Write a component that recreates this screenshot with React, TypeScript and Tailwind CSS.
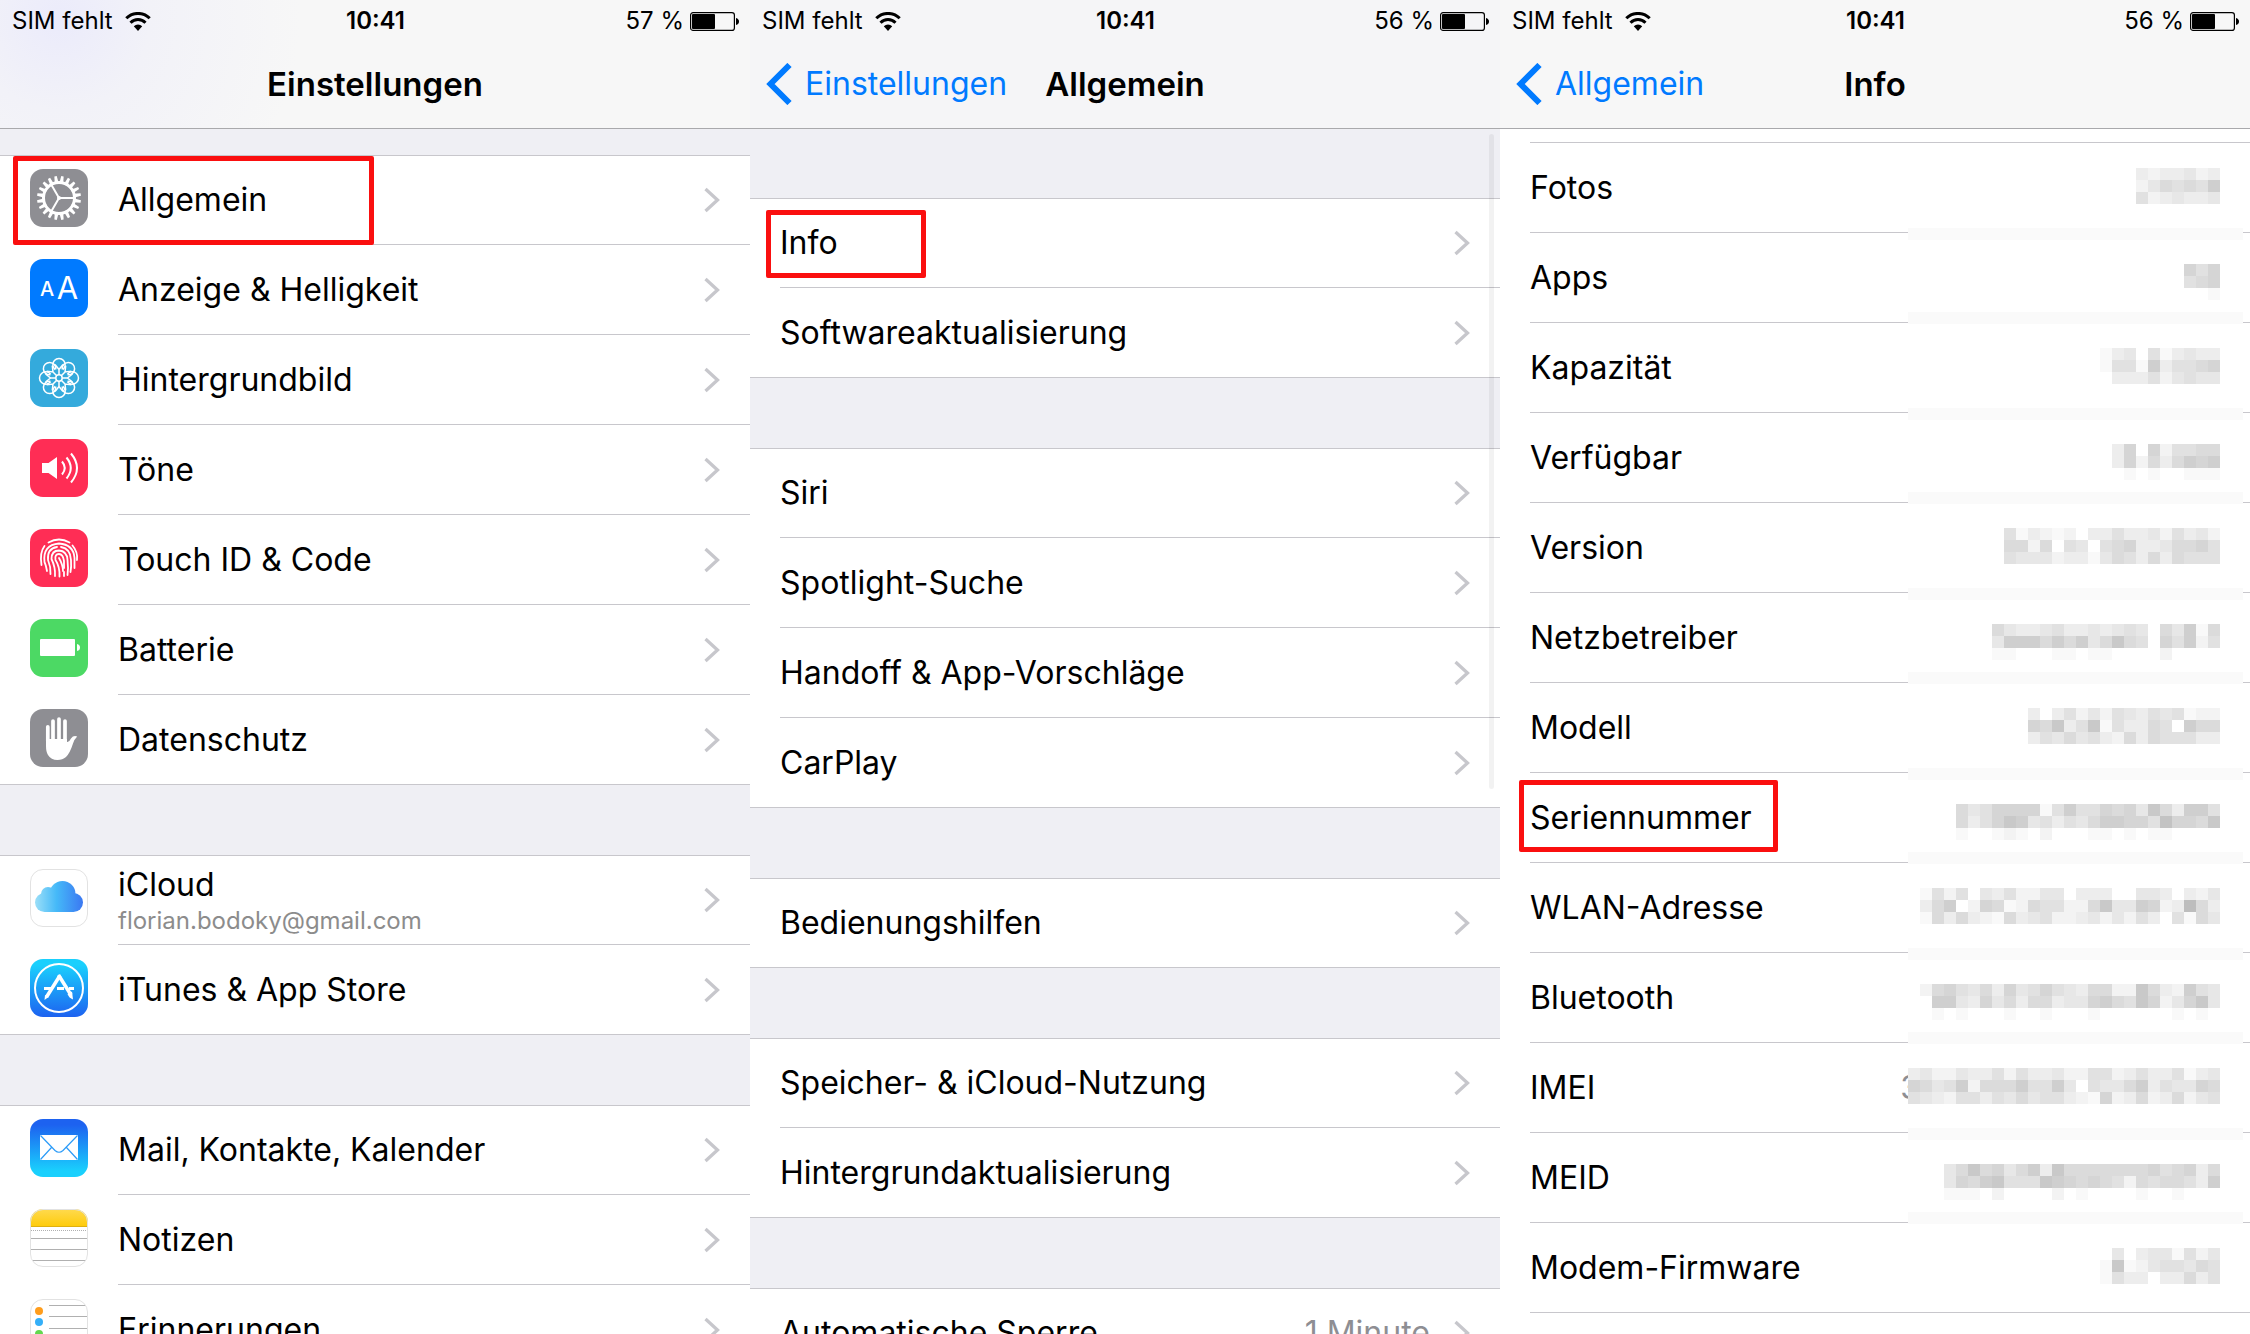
// ============================================================
// iOS SETTINGS — EINSTELLUNGEN / ALLGEMEIN / INFO
// App.tsx
// ============================================================

import type { ReactNode } from 'react'

interface SettingRow {
  label: string
  sub?: string
  value?: string
  icon?: ReactNode
  mark?: string
}

interface InfoRow {
  label: string
  lead?: string
  cells: string[]
  mark?: string
}

// ---------- App icons (58 x 58) ----------

function Tile({ fill, outlined, children }: { fill: string; outlined?: boolean; children: ReactNode }) {
  return (
    <svg viewBox="0 0 58 58" className="w-[58px] h-[58px]" aria-hidden="true">
      <rect width="58" height="58" rx="13" fill={fill} />
      {children}
      {outlined && <rect x="0.5" y="0.5" width="57" height="57" rx="12.5" fill="none" stroke="#e2e2e2" />}
    </svg>
  )
}

const TEETH = Array.from({ length: 20 }, (_, i) => i * 18)
const PETALS = Array.from({ length: 8 }, (_, i) => i * 45)

const GearIcon = () => (
  <Tile fill="#8e8e93">
    <g fill="#fff">
      {TEETH.map((a) => <path key={a} d="M27 14.5 L27.8 7 H30.2 L31 14.5 Z" transform={`rotate(${a + 9} 29 29)`} />)}
    </g>
    <circle cx="29" cy="29" r="15.5" fill="none" stroke="#fff" strokeWidth="3" />
    <path d="M29 29 H44 M29 29 L21.5 16 M29 29 L21.5 42" stroke="#fff" strokeWidth="2" />
    <circle cx="29" cy="29" r="2" fill="#fff" />
  </Tile>
)

const DisplayIcon = () => (
  <Tile fill="#007aff">
    <g fill="#fff" fontFamily="Inter, sans-serif">
      <text x="17" y="37" fontSize="20" fontWeight="500" textAnchor="middle">A</text>
      <text x="37.5" y="40" fontSize="31" textAnchor="middle">A</text>
    </g>
  </Tile>
)

const WallpaperIcon = () => (
  <Tile fill="#34aadc">
    <g fill="none" stroke="#fff" strokeWidth="1.5">
      {PETALS.map((a) => (
        <g key={a} transform={`rotate(${a} 29 29)`}>
          <path d="M25.2 20.6 A6.2 6.2 0 1 1 32.8 20.6" />
          <path d="M25 15.5 L29 20.5 L33 15.5 M29 20.5 V25.8" />
        </g>
      ))}
      <circle cx="29" cy="29" r="3.2" />
    </g>
  </Tile>
)

const SoundIcon = () => (
  <Tile fill="#ff2d55">
    <path d="M12 24 H18.5 L27 18 V40 L18.5 34 H12 Z" fill="#fff" />
    <g fill="none" stroke="#fff" strokeWidth="2">
      <path d="M32 22.5 Q37.5 29 32 35.5" />
      <path d="M36.5 18.5 Q45 29 36.5 39.5" />
      <path d="M41 14.5 Q53 29 41 43.5" />
    </g>
  </Tile>
)

const TouchIdIcon = () => (
  <Tile fill="#ff2d55">
    <g fill="none" stroke="#fff" strokeWidth="1.8" strokeLinecap="round">
      <path d="M18.5 13.5 Q29 7.5 39.5 13.5" />
      <path d="M14.5 17 Q9.5 23.5 11.5 36" />
      <path d="M42.5 16.5 Q48 23 47 31" />
      <path d="M17 42 Q16 36 14.5 33 Q12.5 16 29 14.5 Q43.5 15.5 44.5 29 V39" />
      <path d="M20.5 45 Q21 38 18 31 Q17 19.5 27 18" />
      <path d="M31 18 Q40.5 19.5 41 31 Q41.5 38 40.5 43" />
      <path d="M25 47 Q25.5 38 21.5 30 Q21.5 21.5 29 21.5 Q37 22 37.5 31 Q38.5 39 37.5 46" />
      <path d="M29.5 47.5 Q30 38 25.5 31 Q24.5 25 29 25 Q33 25 34 32 V39" />
      <path d="M34 43 V47" />
      <path d="M29 29 Q33 36 33 42" />
    </g>
  </Tile>
)

const BatteryIcon = () => (
  <Tile fill="#4cd964">
    <rect x="10" y="20" width="35" height="17" rx="1" fill="#fff" />
    <path d="M47 25 Q50 25.5 50 28.5 Q50 31.5 47 32 Z" fill="#fff" />
  </Tile>
)

const PrivacyIcon = () => (
  <Tile fill="#8e8e93">
    <path d="M17.8 17.8 V32 M23 12 V32 M29 10 V32 M35 12 V32" stroke="#fff" strokeWidth="3.7" strokeLinecap="round" />
    <path d="M16 30 H37 V33 Q39 33.5 41 29.5 Q43.5 26 47.2 27.5 Q44.5 30 43 34.5 Q40 44 36 48 Q32.5 51 27.5 51 Q21 51 18 46 Q16 43 16 37 Z" fill="#fff" />
  </Tile>
)

const CloudIcon = () => (
  <Tile fill="#fff" outlined>
    <defs>
      <linearGradient id="cloud" gradientUnits="userSpaceOnUse" x1="5" y1="0" x2="53" y2="0">
        <stop offset="0" stopColor="#9bdff8" />
        <stop offset="0.45" stopColor="#45b9f8" />
        <stop offset="1" stopColor="#3b78f2" />
      </linearGradient>
    </defs>
    <g fill="url(#cloud)">
      <circle cx="14.5" cy="33.5" r="9.5" />
      <circle cx="18" cy="25" r="7" />
      <circle cx="32.5" cy="25" r="13" />
      <circle cx="43.5" cy="33.5" r="9.5" />
      <rect x="14.5" y="30" width="29" height="13" />
    </g>
  </Tile>
)

const StoreIcon = () => (
  <Tile fill="url(#store)">
    <defs>
      <linearGradient id="store" x1="0" y1="0" x2="0" y2="1">
        <stop offset="0.1" stopColor="#1ad0fd" />
        <stop offset="1" stopColor="#1d62f0" />
      </linearGradient>
    </defs>
    <g fill="none" stroke="#fff">
      <circle cx="29" cy="29" r="24" strokeWidth="2" />
      <path d="M14 29.5 H22 M27 29.5 H34 M39 29.5 H44" strokeWidth="3" />
      <path d="M30 16.5 L16.5 38" strokeWidth="3.5" />
      <path d="M28.5 16 L41 36" strokeWidth="3.5" />
    </g>
    <path d="M15 36 L18.5 38 L14.5 41 Z M37.5 35 L42 32.5 L43 40.5 Q39 39 37.5 35 Z" fill="#fff" />
  </Tile>
)

const MailIcon = () => (
  <Tile fill="url(#mail)">
    <defs>
      <linearGradient id="mail" x1="0" y1="0" x2="0" y2="1">
        <stop offset="0.1" stopColor="#1d62f0" />
        <stop offset="0.9" stopColor="#1ad0fd" />
      </linearGradient>
    </defs>
    <rect x="10" y="16" width="38" height="25" rx="0.5" fill="#fff" />
    <path d="M10.5 16.5 L25 31.5 Q29 35 33 31.5 L47.5 16.5 M10.5 40.5 L21.5 28.5 M47.5 40.5 L36.5 28.5" fill="none" stroke="#2b9bf8" strokeWidth="1.2" />
  </Tile>
)

const NotesIcon = () => (
  <Tile fill="#fff" outlined>
    <defs>
      <linearGradient id="notes" x1="0" y1="0" x2="0" y2="1">
        <stop offset="0" stopColor="#ffda4f" />
        <stop offset="1" stopColor="#fecb09" />
      </linearGradient>
    </defs>
    <path d="M0 18 V13 A13 13 0 0 1 13 0 H45 A13 13 0 0 1 58 13 V18 Z" fill="url(#notes)" />
    <path d="M0 17.5 H58" stroke="#dfb010" />
    <path d="M1 21.5 H57" stroke="#b0b0b0" strokeDasharray="1 1" />
    <path d="M0 29.5 H58 M0 40.5 H58 M2 51.5 H56" stroke="#b0b0b0" />
  </Tile>
)

const RemindersIcon = () => (
  <Tile fill="#fff" outlined>
    <path d="M19 6.5 H56 M19 17.5 H58 M19 29.5 H58 M19 40.5 H58" stroke="#b0b0b0" />
    <circle cx="9" cy="12" r="4" fill="#ff9d1c" />
    <circle cx="9" cy="23" r="4" fill="#34aff8" />
    <circle cx="9" cy="35" r="4" fill="#62d84e" />
  </Tile>
)

// ---------- Data ----------

const SETTINGS: SettingRow[][] = [
  [
    { label: 'Allgemein', icon: <GearIcon />, mark: 'left-[13px] top-px w-[361px] h-[89px]' },
    { label: 'Anzeige & Helligkeit', icon: <DisplayIcon /> },
    { label: 'Hintergrundbild', icon: <WallpaperIcon /> },
    { label: 'Töne', icon: <SoundIcon /> },
    { label: 'Touch ID & Code', icon: <TouchIdIcon /> },
    { label: 'Batterie', icon: <BatteryIcon /> },
    { label: 'Datenschutz', icon: <PrivacyIcon /> },
  ],
  [
    { label: 'iCloud', sub: 'florian.bodoky@gmail.com', icon: <CloudIcon /> },
    { label: 'iTunes & App Store', icon: <StoreIcon /> },
  ],
  [
    { label: 'Mail, Kontakte, Kalender', icon: <MailIcon /> },
    { label: 'Notizen', icon: <NotesIcon /> },
    { label: 'Erinnerungen', icon: <RemindersIcon /> },
  ],
]

const GENERAL: SettingRow[][] = [
  [{ label: 'Info', mark: 'left-4 top-3 w-40 h-[68px]' }, { label: 'Softwareaktualisierung' }],
  [{ label: 'Siri' }, { label: 'Spotlight-Suche' }, { label: 'Handoff & App-Vorschläge' }, { label: 'CarPlay' }],
  [{ label: 'Bedienungshilfen' }],
  [{ label: 'Speicher- & iCloud-Nutzung' }, { label: 'Hintergrundaktualisierung' }],
  [{ label: 'Automatische Sperre', value: '1 Minute' }],
]

// Pixelated values: one hex digit per cell, 0 = white, higher = darker
const INFO: InfoRow[] = [
  { label: 'Fotos',          cells: ['3233423', '2465658', '5234334'] },
  { label: 'Apps',           cells: ['757', '567', '001'] },
  { label: 'Kapazität',      cells: ['1340513433', '1551835567', '0333524544'] },
  { label: 'Verfügbar',      cells: ['370725566', '372636878', '010100111'] },
  { label: 'Version',        cells: ['0513212033533425342', '0662605405673346675', '0544423314653636555'] },
  { label: 'Netzbetreiber',  cells: ['6433453343454064816', '4888686846965075825', '1100011011000020000'] },
  { label: 'Modell',         cells: ['3035242543545122', '7693591533650866', '3546453263655533'] },
  { label: 'Seriennummer',   cells: ['6457777158557674963885', '63579845354688775a7769', '1001210200011010110000'], mark: 'left-[19px] top-[7px] w-[259px] h-[72px]' },
  { label: 'WLAN-Adresse',   cells: ['1525043522440333004430324', '3680276126552269448723b63', '1636321634522342425305164'] },
  { label: 'Bluetooth',      cells: ['2675463745754366229632854', '0884374636634478659724794', '0101000100100010000001010'] },
  { label: 'IMEI', lead: '3', cells: ['34224335253342255235335134', '76458266685584054468354476', '54325535464553217236236245'] },
  { label: 'MEID',           cells: ['46967468396666666756736', '47689555987676526566538', '11102000020100001001000'] },
  { label: 'Modem-Firmware', cells: ['0403441524', '1912455465', '1533033635'] },
]

// ---------- Parts ----------

function StatusBar({ percent }: { percent: string }) {
  return (
    <div className="grid grid-cols-3 items-center h-[42px] pl-3 pr-[11px] text-2xl leading-6">
      <div className="flex items-center gap-3">
        <span>SIM fehlt</span>
        <svg viewBox="0 0 26 19" className="w-[26px] h-[19px]" aria-hidden="true">
          <g fill="none" stroke="#000" strokeWidth="3">
            <path d="M1.3 6.3 A16.5 16.5 0 0 1 24.7 6.3" />
            <path d="M5.5 10.7 A10.6 10.6 0 0 1 20.5 10.7" />
          </g>
          <path d="M13 19 L8.8 14.3 A6 6 0 0 1 17.2 14.3 Z" />
        </svg>
      </div>
      <span className="text-center font-semibold">10:41</span>
      <div className="flex items-center justify-end gap-1.5">
        <span>{percent} %</span>
        <svg viewBox="0 0 49 19" className="w-[49px] h-[19px]" aria-hidden="true">
          <rect x="0.6" y="0.6" width="43.8" height="17.8" rx="2.5" fill="none" stroke="#000" strokeWidth="1.2" />
          <rect x="2" y="2" width="23" height="15" rx="1" />
          <path d="M46 6 Q49 7 49 9.5 Q49 12 46 13 Z" />
        </svg>
      </div>
    </div>
  )
}

function NavHeader({ title, back, percent, tint }: { title: string; back?: string; percent: string; tint: string }) {
  return (
    <header className={`h-[129px] border-b border-[#a9a9ac] ${tint}`}>
      <StatusBar percent={percent} />
      <nav className="relative flex items-center justify-center h-[84px]">
        {back && (
          <a href="#" className="absolute left-4 flex items-center gap-3 text-[32px] leading-10 text-[#007aff]">
            <svg viewBox="0 0 27 42" className="w-[27px] h-[42px]" aria-hidden="true">
              <path d="M23.5 2 L4.5 21 L23.5 40" fill="none" stroke="currentColor" strokeWidth="6" />
            </svg>
            {back}
          </a>
        )}
        <h1 className="text-[33px] leading-10 font-semibold">{title}</h1>
      </nav>
    </header>
  )
}

const Mark = ({ box }: { box: string }) => (
  <span className={`absolute z-10 border-5 border-[#fa0f0f] rounded-xs pointer-events-none ${box}`} />
)

const Chevron = () => (
  <svg viewBox="0 0 16 26" className="w-4 h-[26px] shrink-0" aria-hidden="true">
    <path d="M1.5 2 L13.5 13 L1.5 24" fill="none" stroke="#c7c7cc" strokeWidth="3.3" />
  </svg>
)

function SettingGroup({ rows }: { rows: SettingRow[] }) {
  return (
    <ul className="bg-white">
      {rows.map((row, i) => {
        const last = i === rows.length - 1
        return (
          <li key={row.label}
            className={`relative ${i === 0 ? 'shadow-[inset_0_1px_0_#c8c7cc]' : ''} ${last ? 'border-b border-[#c8c7cc]' : ''}`}>
            <a href="#" className={`flex pl-[30px] ${last ? 'h-[89px]' : 'h-[90px]'}`}>
              {row.icon && <span className="shrink-0 w-[88px] pt-3.5">{row.icon}</span>}
              <span className={`flex flex-1 items-center gap-6 pr-[30px] ${last ? '' : 'border-b border-[#c8c7cc]'}`}>
                <span className={`flex flex-col flex-1 ${row.sub ? 'pt-0.5' : ''}`}>
                  <span className="text-[32px] leading-10">{row.label}</span>
                  {row.sub && <span className="text-2xl leading-8 text-[#8c8c8c]">{row.sub}</span>}
                </span>
                {row.value && <span className="text-[32px] leading-10 text-[#8e8e93]">{row.value}</span>}
                <Chevron />
              </span>
            </a>
            {row.mark && <Mark box={row.mark} />}
          </li>
        )
      })}
    </ul>
  )
}

function Mosaic({ cells }: { cells: string[] }) {
  const cols = cells[0].length
  return (
    <svg width={cols * 12} height="36" shapeRendering="crispEdges" className="relative bg-white" aria-hidden="true">
      {cells.map((line, y) => line.split('').map((c, x) => {
        const level = 255 - parseInt(c, 16) * 6
        return <rect key={`${x}-${y}`} x={x * 12} y={y * 12} width="12" height="12" fill={`rgb(${level},${level},${level})`} />
      }))}
    </svg>
  )
}

function InfoList() {
  return (
    <dl className="mt-[13px] before:block before:ml-[30px] before:h-px before:bg-[#c8c7cc]">
      {INFO.map((row, i) => {
        const odd = i % 2 === 1
        const last = i === INFO.length - 1
        return (
          <div key={row.label} className="relative h-[90px] pl-[30px]">
            <div className="flex h-full border-b border-[#c8c7cc] pr-[30px]">
              <dt className="flex flex-1 items-center text-[32px] leading-10">{row.label}</dt>
              <dd className={`flex items-start ${odd ? 'pt-[31px]' : 'pt-[25px]'}`}>
                {row.lead && <span className="-mr-3 text-[32px] leading-10 text-[#8e8e93]">{row.lead}</span>}
                <Mosaic cells={row.cells} />
              </dd>
            </div>
            {!last && (
              <span className={`absolute z-10 right-[7px] w-[335px] h-3 bg-[#fafafa] ${odd ? 'top-[79px]' : 'top-[85px]'}`} />
            )}
            {row.mark && <Mark box={row.mark} />}
          </div>
        )
      })}
    </dl>
  )
}

// ---------- Page ----------

export default function App() {
  return (
    <main className="grid grid-cols-3 h-screen overflow-hidden bg-white text-black font-['Inter',sans-serif]">

      {/* Einstellungen */}
      <section className="bg-[#efeff4]">
        <NavHeader title="Einstellungen" percent="57"
          tint="bg-[radial-gradient(circle_at_60px_20px,#ebebfb_0,#f2f2f8_90px,#f7f7f7_240px)]" />
        <div className="flex flex-col gap-[70px] pt-[26px]">
          {SETTINGS.map((rows) => <SettingGroup key={rows[0].label} rows={rows} />)}
        </div>
      </section>

      {/* Allgemein */}
      <section className="relative bg-[#efeff4]">
        <NavHeader title="Allgemein" back="Einstellungen" percent="56" tint="bg-[#f5f5f7]" />
        <div className="flex flex-col gap-[70px] pt-[69px]">
          {GENERAL.map((rows) => <SettingGroup key={rows[0].label} rows={rows} />)}
        </div>
        <span className="absolute right-1.5 top-[134px] w-[5px] h-[655px] rounded-full bg-black/5" />
      </section>

      {/* Info */}
      <section className="bg-white">
        <NavHeader title="Info" back="Allgemein" percent="56" tint="bg-[#f7f7f7]" />
        <InfoList />
      </section>
    </main>
  )
}
